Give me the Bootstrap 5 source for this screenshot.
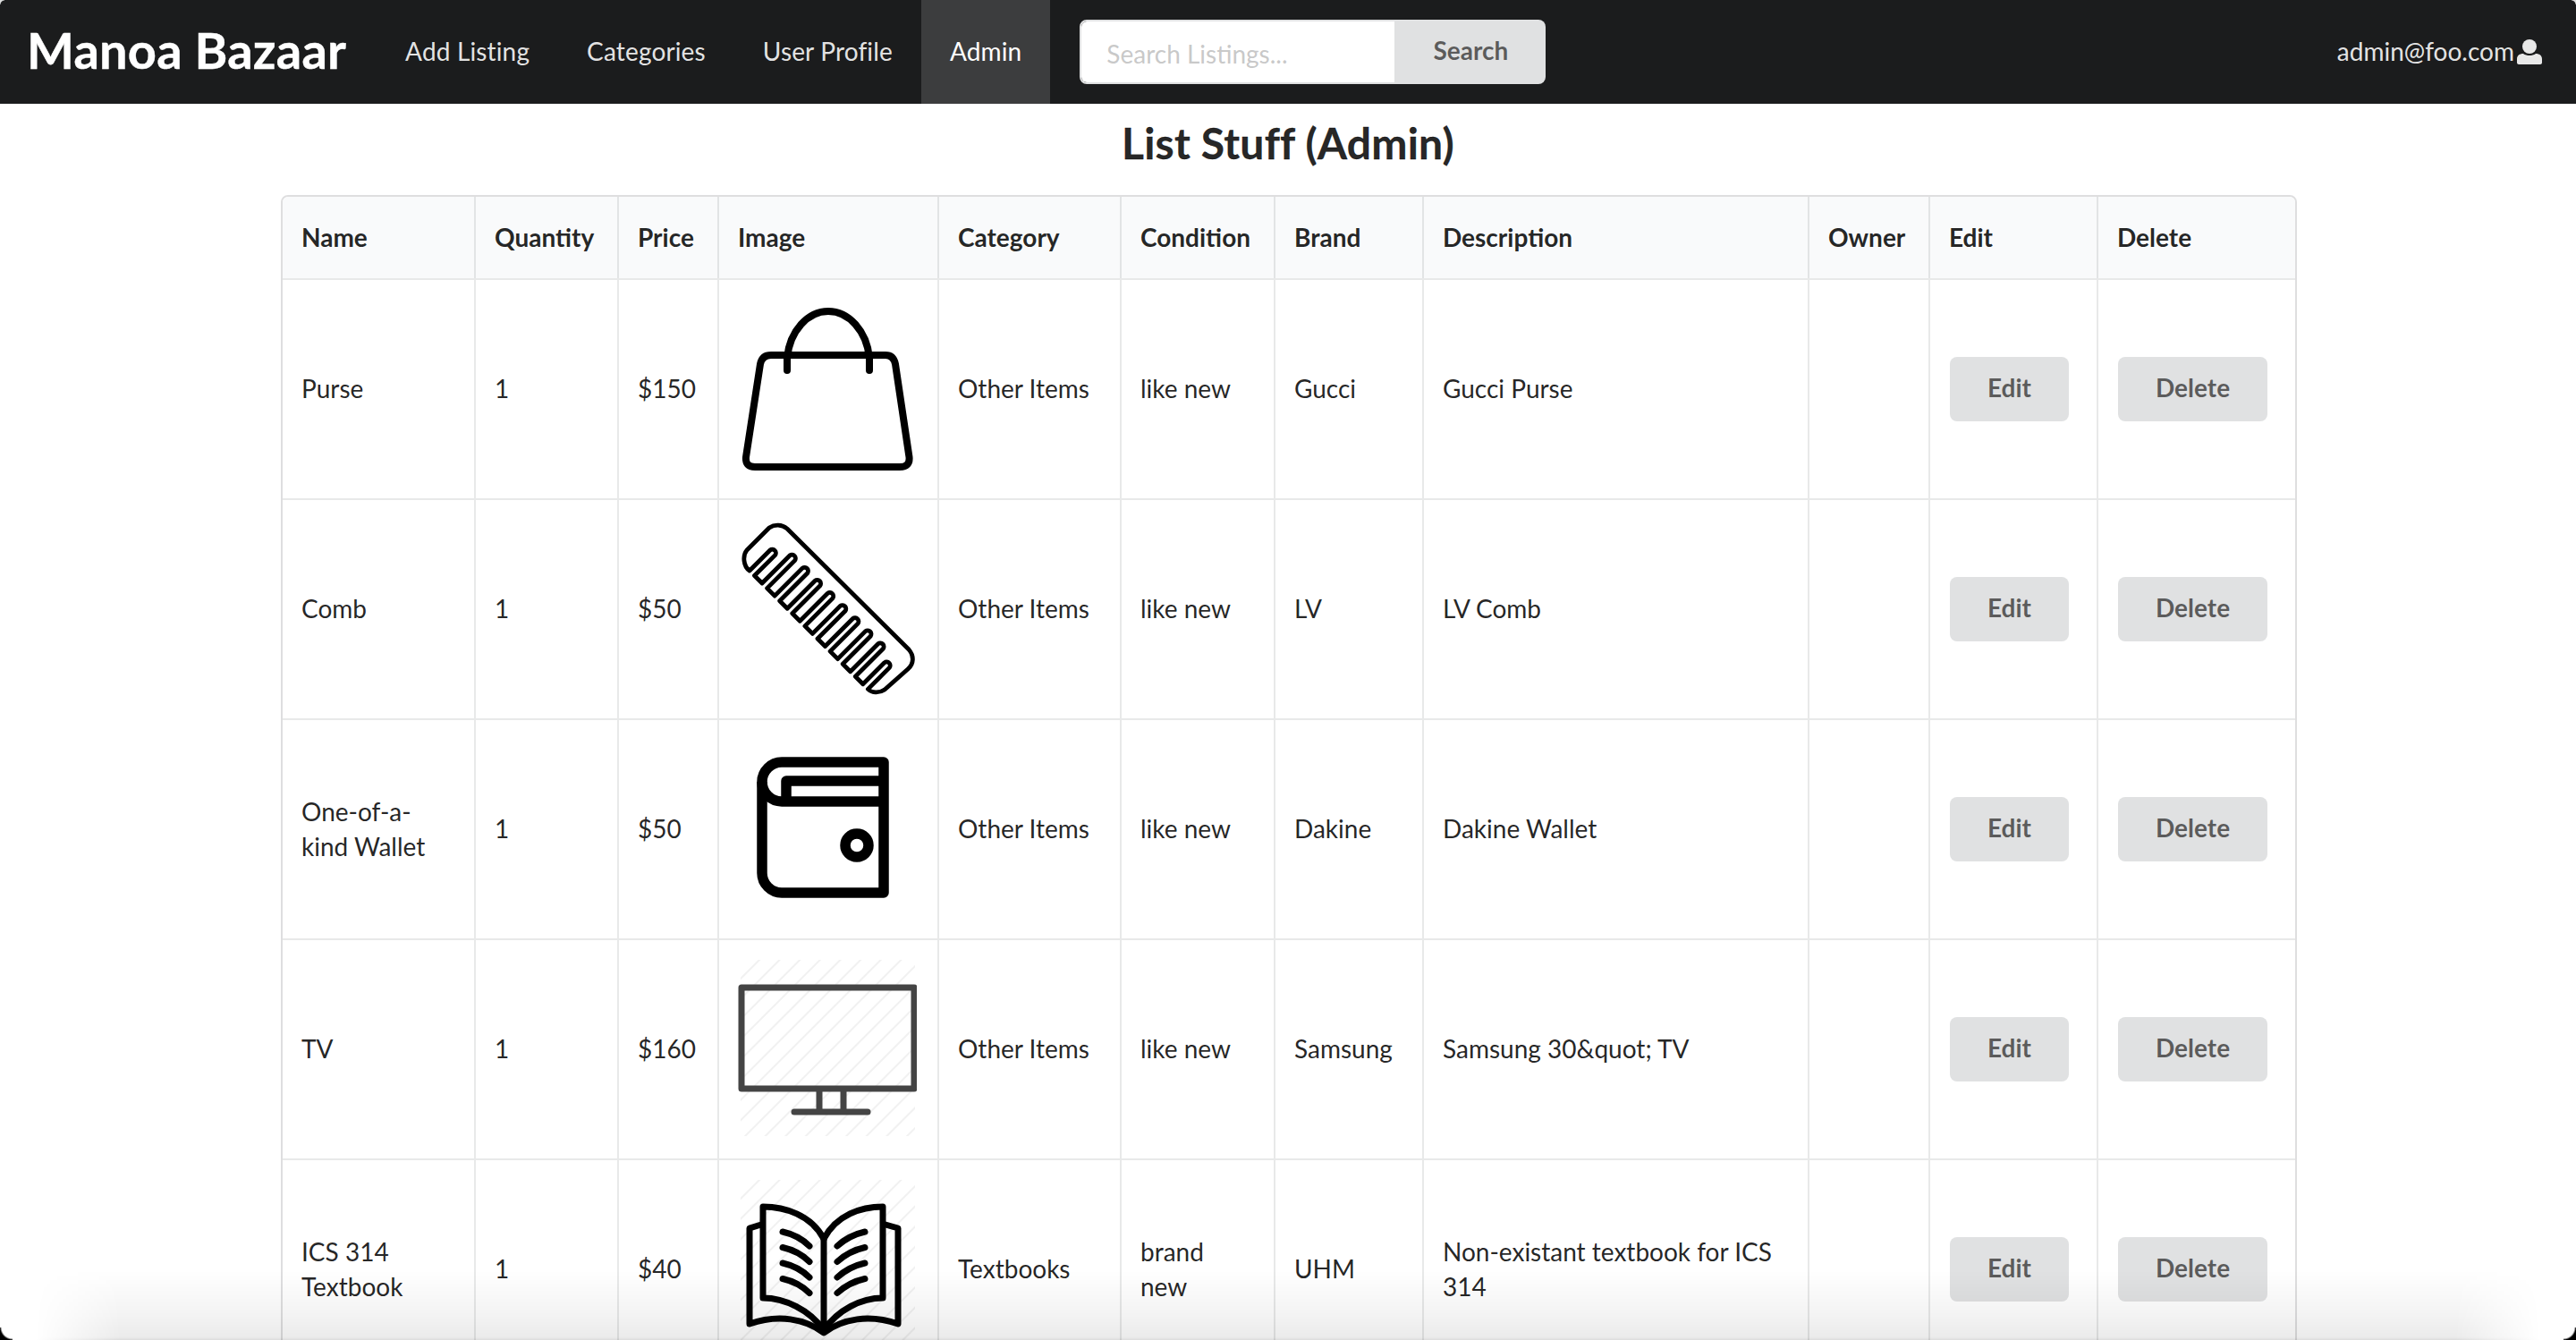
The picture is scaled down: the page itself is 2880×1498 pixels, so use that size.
<!DOCTYPE html>
<html lang="en">
<head>
    <meta charset="UTF-8">
    <meta name="viewport" content="width=device-width, initial-scale=1.0">
    <title>List Stuff (Admin) - Manoa Bazaar</title>
    <link rel="stylesheet" href="https://cdn.jsdelivr.net/npm/bootstrap@5.3.0/dist/css/bootstrap.min.css">
    <style>
        html, body { height: 100%; overflow: hidden; }
        body { font-family: Lato, "Helvetica Neue", Arial, sans-serif; font-size: 28px; line-height: 1.4; color: rgba(0,0,0,.87); }
        .top-bar { background: #1b1c1d; height: 116px; padding: 0; align-items: stretch; }
        .top-bar .navbar-brand { font-size: 56px; font-weight: 700; letter-spacing: .2px; color: #fff; padding: 0 34px 5px 30px; margin: 0; display: flex; align-items: center; line-height: 1; -webkit-text-stroke: .4px #fff; }
        .top-bar .navbar-nav { align-items: stretch; }
        .top-bar .navbar-nav .nav-link { font-size: 28px; letter-spacing: .15px; color: rgba(255,255,255,.9); padding: 0 32px; height: 116px; display: flex; align-items: center; }
        .top-bar .navbar-nav .nav-link.active { color: #fff; background: rgba(255,255,255,.15); }
        .search-box { width: 521px; height: 72px; margin-left: 33px; align-self: center; flex-wrap: nowrap; }
        .search-box .form-control { font-size: 28px; padding: 4px 28px 0; border: 2px solid #e0e1e2; border-radius: 8px 0 0 8px; height: 72px; color: #333; }
        .search-box .form-control::placeholder { color: rgba(191,191,191,.87); }
        .search-box .btn { width: 168px; flex: none; }
        .grey-btn { background: #e0e1e2; color: rgba(0,0,0,.6); font-size: 28px; font-weight: 700; line-height: 28px; padding: 20px 42px 24px; border: 0; border-radius: 8px; }
        .grey-btn:hover { background: #cacbcd; color: rgba(0,0,0,.8); }
        .user-link { color: rgba(255,255,255,.9); margin-left: auto; padding-right: 38px; display: flex; align-items: center; gap: 3px; text-decoration: none; }
        .user-link svg { width: 28px; height: 28px; }
        .page-wrap { width: 2254px; margin-left: 314px; }
        .page-title { font-size: 48px; font-weight: 700; letter-spacing: .2px; line-height: 62px; text-align: center; margin: 13px 0 27px; padding-right: 2px; -webkit-text-stroke: .3px rgba(0,0,0,.87); }
        .stuff-table { table-layout: fixed; width: 2254px; border-collapse: separate; border-spacing: 0; border: 2px solid rgba(34,36,38,.15); border-radius: 8px; margin: 0; font-size: 28px; }
        .stuff-table > :not(caption) > * > * { padding: 21.5px 21px 22.5px; border-bottom: 0; border-left: 2px solid rgba(34,36,38,.1); border-top: 2px solid rgba(34,36,38,.1); background: transparent; color: rgba(0,0,0,.87); vertical-align: middle; box-shadow: none; }
        .stuff-table > tbody > tr > td.pic-cell { padding: 22px 21px; }
        .stuff-table > tbody > tr > td.act-cell { padding: 22px; }
        .stuff-table tr > :first-child { border-left: 0; }
        .stuff-table thead th { background: #f9fafb; font-weight: 700; padding: 26px 21px; border-top: 0; border-bottom: 0; }
        .stuff-table thead th:first-child { border-top-left-radius: 6px; }
        .stuff-table thead th:last-child { border-top-right-radius: 6px; }
        .stuff-pic { display: block; width: 200px; height: 200px; }
        .bottom-shade { position: fixed; left: 0; right: 0; bottom: 0; height: 78px; pointer-events: none; background: linear-gradient(to top, rgba(0,0,0,.14), rgba(0,0,0,.08) 3px, rgba(0,0,0,.045) 40%, rgba(0,0,0,0)); -webkit-mask-image: linear-gradient(to right, transparent 40px, #000 135px, #000 calc(100% - 135px), transparent calc(100% - 40px)); mask-image: linear-gradient(to right, transparent 40px, #000 135px, #000 calc(100% - 135px), transparent calc(100% - 40px)); }
        .win-corner { position: fixed; pointer-events: none; }
        .corner-bl { left: 0; bottom: 0; width: 14px; height: 14px; background: radial-gradient(circle at 100% 0, transparent 12px, #000 14px); }
        .corner-br { right: 0; bottom: 0; width: 14px; height: 14px; background: radial-gradient(circle at 0 0, transparent 12px, #000 14px); }
        .corner-tl { left: 0; top: 0; width: 5px; height: 5px; background: radial-gradient(circle at 100% 100%, transparent 4px, #ddd 5px); }
        .corner-tr { right: 0; top: 0; width: 5px; height: 5px; background: radial-gradient(circle at 0 100%, transparent 4px, #ddd 5px); }
    </style>
</head>
<body>
    <nav class="navbar navbar-expand navbar-dark top-bar">
        <a class="navbar-brand" href="#">Manoa Bazaar</a>
        <ul class="navbar-nav">
            <li class="nav-item"><a class="nav-link" href="#">Add Listing</a></li>
            <li class="nav-item"><a class="nav-link" href="#">Categories</a></li>
            <li class="nav-item"><a class="nav-link" href="#">User Profile</a></li>
            <li class="nav-item"><a class="nav-link active" href="#">Admin</a></li>
        </ul>
        <form class="input-group search-box">
            <input type="text" class="form-control" placeholder="Search Listings...">
            <button type="button" class="btn grey-btn">Search</button>
        </form>
        <a class="user-link" href="#">admin@foo.com
            <svg viewBox="0 0 28 28" fill="#e8e8e8"><ellipse cx="14" cy="8" rx="8" ry="8"/><path d="M0 26v-4c0-4 3-6 7-6 2 1.400 4.500 2 7 2s5-.6 7-2c4 0 7 2 7 6v4c0 1-1 2-2 2H2c-1 0-2-1-2-2z"/></svg>
        </a>
    </nav>

    <div class="page-wrap">
        <h2 class="page-title">List Stuff (Admin)</h2>
        <table class="table stuff-table">
            <colgroup>
                <col style="width:214px"><col style="width:160px"><col style="width:112px"><col style="width:246px"><col style="width:204px"><col style="width:172px"><col style="width:166px"><col style="width:431px"><col style="width:135px"><col style="width:188px"><col style="width:222px">
            </colgroup>
            <thead>
                <tr><th>Name</th><th>Quantity</th><th>Price</th><th>Image</th><th>Category</th><th>Condition</th><th>Brand</th><th>Description</th><th>Owner</th><th>Edit</th><th>Delete</th></tr>
            </thead>
            <tbody>
                <tr>
                    <td>Purse</td><td>1</td><td>$150</td>
                    <td class="pic-cell">
                        <svg class="stuff-pic" viewBox="0 0 200 200" fill="none" stroke="#000" stroke-width="8" stroke-linecap="round" stroke-linejoin="round">
                            <path d="M37 62H165Q174 62 176 72L191.500 176Q192.500 187 181 187H19Q8 187 9 176L25 72Q27 62 37 62Z"/>
                            <path d="M55 79V65C58 35 78 13 101 13C124 13 144 35 147 65V79"/>
                        </svg>
                    </td>
                    <td>Other Items</td><td>like new</td><td>Gucci</td><td>Gucci Purse</td><td></td>
                    <td class="act-cell"><a class="btn grey-btn" href="#">Edit</a></td><td class="act-cell"><a class="btn grey-btn" href="#">Delete</a></td>
                </tr>
                <tr>
                    <td>Comb</td><td>1</td><td>$50</td>
                    <td class="pic-cell">
                        <svg class="stuff-pic" viewBox="0 0 200 200" fill="none" stroke="#000" stroke-width="4.800" stroke-linejoin="round">
                            <path d="M13 57L36 34a4 4 0 0 1 5.600 5.600L18.500 62.500
                                l8.500 8.500 31 -31 a4 4 0 0 1 5.600 5.600 l-31 31
                                l8.500 8.500 31 -31 a4 4 0 0 1 5.600 5.600 l-31 31
                                l8.500 8.500 31 -31 a4 4 0 0 1 5.600 5.600 l-31 31
                                l8.500 8.500 31 -31 a4 4 0 0 1 5.600 5.600 l-31 31
                                l8.500 8.500 31 -31 a4 4 0 0 1 5.600 5.600 l-31 31
                                l8.500 8.500 31 -31 a4 4 0 0 1 5.600 5.600 l-31 31
                                l8.500 8.500 31 -31 a4 4 0 0 1 5.600 5.600 l-31 31
                                l8.500 8.500 31 -31 a4 4 0 0 1 5.600 5.600 l-31 31
                                l8.500 8.500 24 -24 a4 4 0 0 1 5.600 5.600 l-24 24
                                C150 194 158 194 164 190L190 167C197 161 197 152 191 145L55 10C49 5 41 5 35 9L10 34C5 40 6 52 13 57Z"/>
                        </svg>
                    </td>
                    <td>Other Items</td><td>like new</td><td>LV</td><td>LV Comb</td><td></td>
                    <td class="act-cell"><a class="btn grey-btn" href="#">Edit</a></td><td class="act-cell"><a class="btn grey-btn" href="#">Delete</a></td>
                </tr>
                <tr>
                    <td>One-of-a-kind Wallet</td><td>1</td><td>$50</td>
                    <td class="pic-cell">
                        <svg class="stuff-pic" viewBox="0 0 200 200" fill="none" stroke="#000" stroke-width="11.500" stroke-linejoin="round">
                            <path d="M49 25H163V171H49C37 171 27 161 27 149V47C27 35 37 25 49 25Z"/>
                            <path d="M27 47A22 22 0 0 0 49 69H163"/>
                            <path d="M163 46H54V69"/>
                            <circle cx="133" cy="118" r="13"/>
                        </svg>
                    </td>
                    <td>Other Items</td><td>like new</td><td>Dakine</td><td>Dakine Wallet</td><td></td>
                    <td class="act-cell"><a class="btn grey-btn" href="#">Edit</a></td><td class="act-cell"><a class="btn grey-btn" href="#">Delete</a></td>
                </tr>
                <tr>
                    <td>TV</td><td>1</td><td>$160</td>
                    <td class="pic-cell">
                        <svg class="stuff-pic" viewBox="0 0 200 200" fill="none" stroke="#444" stroke-width="7" stroke-linejoin="round">
                            <defs>
                                <pattern id="hatchTv" width="16" height="16" patternUnits="userSpaceOnUse" patternTransform="rotate(45)">
                                    <line x1="0" y1="0" x2="0" y2="16" stroke="#f1f1f1" stroke-width="4"/>
                                </pattern>
                            </defs>
                            <rect x="3" y="0" width="195" height="197" fill="url(#hatchTv)" stroke="none"/>
                            <rect x="4" y="31" width="193" height="113"/>
                            <path d="M91 147V169M118 147V169"/>
                            <path d="M63 170H145" stroke-linecap="round"/>
                        </svg>
                    </td>
                    <td>Other Items</td><td>like new</td><td>Samsung</td><td>Samsung 30&amp;quot; TV</td><td></td>
                    <td class="act-cell"><a class="btn grey-btn" href="#">Edit</a></td><td class="act-cell"><a class="btn grey-btn" href="#">Delete</a></td>
                </tr>
                <tr>
                    <td>ICS 314 Textbook</td><td>1</td><td>$40</td>
                    <td class="pic-cell">
                        <svg class="stuff-pic" viewBox="0 0 200 200" fill="none" stroke="#000" stroke-width="7" stroke-linecap="round" stroke-linejoin="round">
                            <defs>
                                <pattern id="hatchBook" width="16" height="16" patternUnits="userSpaceOnUse" patternTransform="rotate(45)">
                                    <line x1="0" y1="0" x2="0" y2="16" stroke="#f1f1f1" stroke-width="4"/>
                                </pattern>
                            </defs>
                            <rect x="3" y="0" width="195" height="197" fill="url(#hatchBook)" stroke="none"/>
                            <path d="M96 66C82 39 52 30 28 30V132C52 132 80 145 96 168"/>
                            <path d="M96 66C110 39 138 30 162 30V132C138 132 112 145 96 168V66"/>
                            <path d="M26 50L13 54V161C45 150 75 155 96 171C117 155 147 150 179 161V54L165 50"/>
                            <path d="M50 58Q68 62 80 74M50 75.500Q68 79.500 80 91.500M50 93Q68 97 80 109M50 110.500Q68 114.500 80 126.500"/>
                            <path d="M142 58Q124 62 111 74M142 75.500Q124 79.500 111 91.500M142 93Q124 97 111 109M142 110.500Q124 114.500 111 126.500"/>
                        </svg>
                    </td>
                    <td>Textbooks</td><td>brand new</td><td>UHM</td><td>Non-existant textbook for ICS 314</td><td></td>
                    <td class="act-cell"><a class="btn grey-btn" href="#">Edit</a></td><td class="act-cell"><a class="btn grey-btn" href="#">Delete</a></td>
                </tr>
            </tbody>
        </table>
    </div>
    <div class="bottom-shade"></div>
    <div class="win-corner corner-bl"></div>
    <div class="win-corner corner-br"></div>
    <div class="win-corner corner-tl"></div>
    <div class="win-corner corner-tr"></div>
    <script src="https://cdn.jsdelivr.net/npm/bootstrap@5.3.0/dist/js/bootstrap.bundle.min.js"></script>
</body>
</html>
